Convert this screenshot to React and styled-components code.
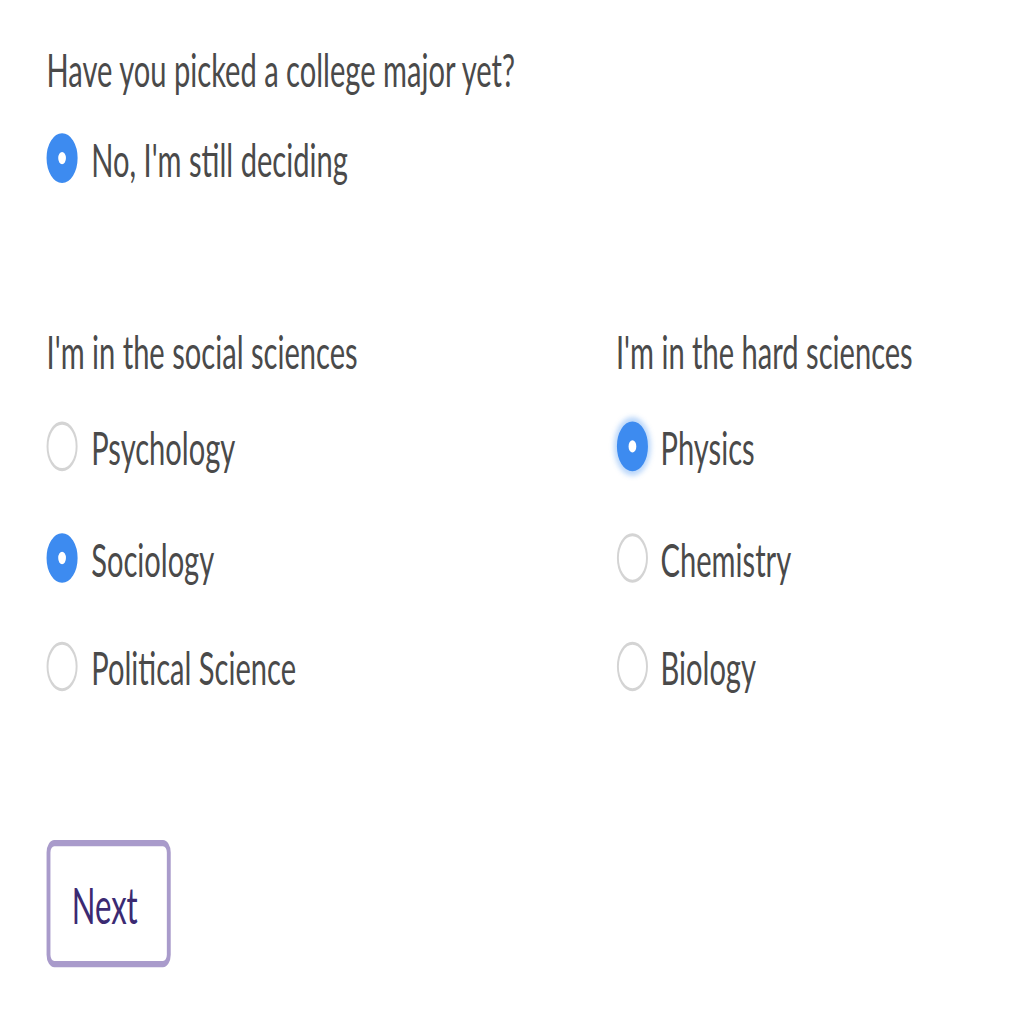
import React from 'react'
import styled, { createGlobalStyle } from 'styled-components'

//#region styled components
const GlobalStyle = createGlobalStyle`
  html, body {
    margin: 0;
    padding: 0;
    background: #ffffff;
  }
`

const Page = styled('div')`
  width: 1024px;
  height: 1024px;
  overflow: hidden;
  background: #ffffff;
`

// the reference is a small form stretched to fill the square frame
const Stage = styled('div')`
  width: 528px;
  height: 330px;
  transform: scale(1.94, 3.1);
  transform-origin: 0 0;
  box-sizing: border-box;
  padding: 11.5px 24px 0 24px;
  font-family: Lato, 'Open Sans', sans-serif;
  font-size: 15px;
  color: #4a4a4a;
  display: flex;
  flex-direction: column;
`

const Question = styled('div')`
  line-height: 20px;
`

const Group = styled('div')`
  display: flex;
  flex-direction: column;
  gap: 15.5px;
  margin-top: ${props => props.$top || 0}px;
`

const Columns = styled('div')`
  display: grid;
  grid-template-columns: 293.5px 1fr;
  margin-top: 42px;
`

const Option = styled('label')`
  display: flex;
  align-items: center;
  gap: 7px;
  height: 20px;
  line-height: 20px;
`

const Dot = styled('span')`
  width: 16px;
  height: 16px;
  box-sizing: border-box;
  border-radius: 50%;
  flex-shrink: 0;
  background: #ffffff;
  border: ${props => (props.$on ? '6px solid #3d8bf0' : '1.5px solid #d4d4d4')};
  box-shadow: ${props => (props.$focus ? '0 0 2px 1.5px rgba(61, 139, 240, 0.35)' : 'none')};
`

const NextButton = styled('button')`
  margin-top: 46px;
  align-self: flex-start;
  width: 64px;
  height: 41px;
  box-sizing: border-box;
  border: 2px solid #a99bcb;
  border-radius: 4px;
  background: #ffffff;
  font-family: Lato, 'Open Sans', sans-serif;
  font-size: 16px;
  color: #3b2a72;
  padding: 0 4px 0 0;
  cursor: pointer;
`
//#endregion

const RadioRow = ({ label, on, focus }) => (
  <Option>
    <Dot $on={on} $focus={focus} />
    <span>{label}</span>
  </Option>
)

const App = () => {
  return (
    <Page>
      <GlobalStyle />
      <Stage>
        <Question>Have you picked a college major yet?</Question>
        <Group $top={9.5}>
          <RadioRow label="No, I'm still deciding" on />
        </Group>
        <Columns>
          <div>
            <Question>I'm in the social sciences</Question>
            <Group $top={11}>
              <RadioRow label="Psychology" />
              <RadioRow label="Sociology" on />
              <RadioRow label="Political Science" />
            </Group>
          </div>
          <div>
            <Question>I'm in the hard sciences</Question>
            <Group $top={11}>
              <RadioRow label="Physics" on focus />
              <RadioRow label="Chemistry" />
              <RadioRow label="Biology" />
            </Group>
          </div>
        </Columns>
        <NextButton>Next</NextButton>
      </Stage>
    </Page>
  )
}

export default App
